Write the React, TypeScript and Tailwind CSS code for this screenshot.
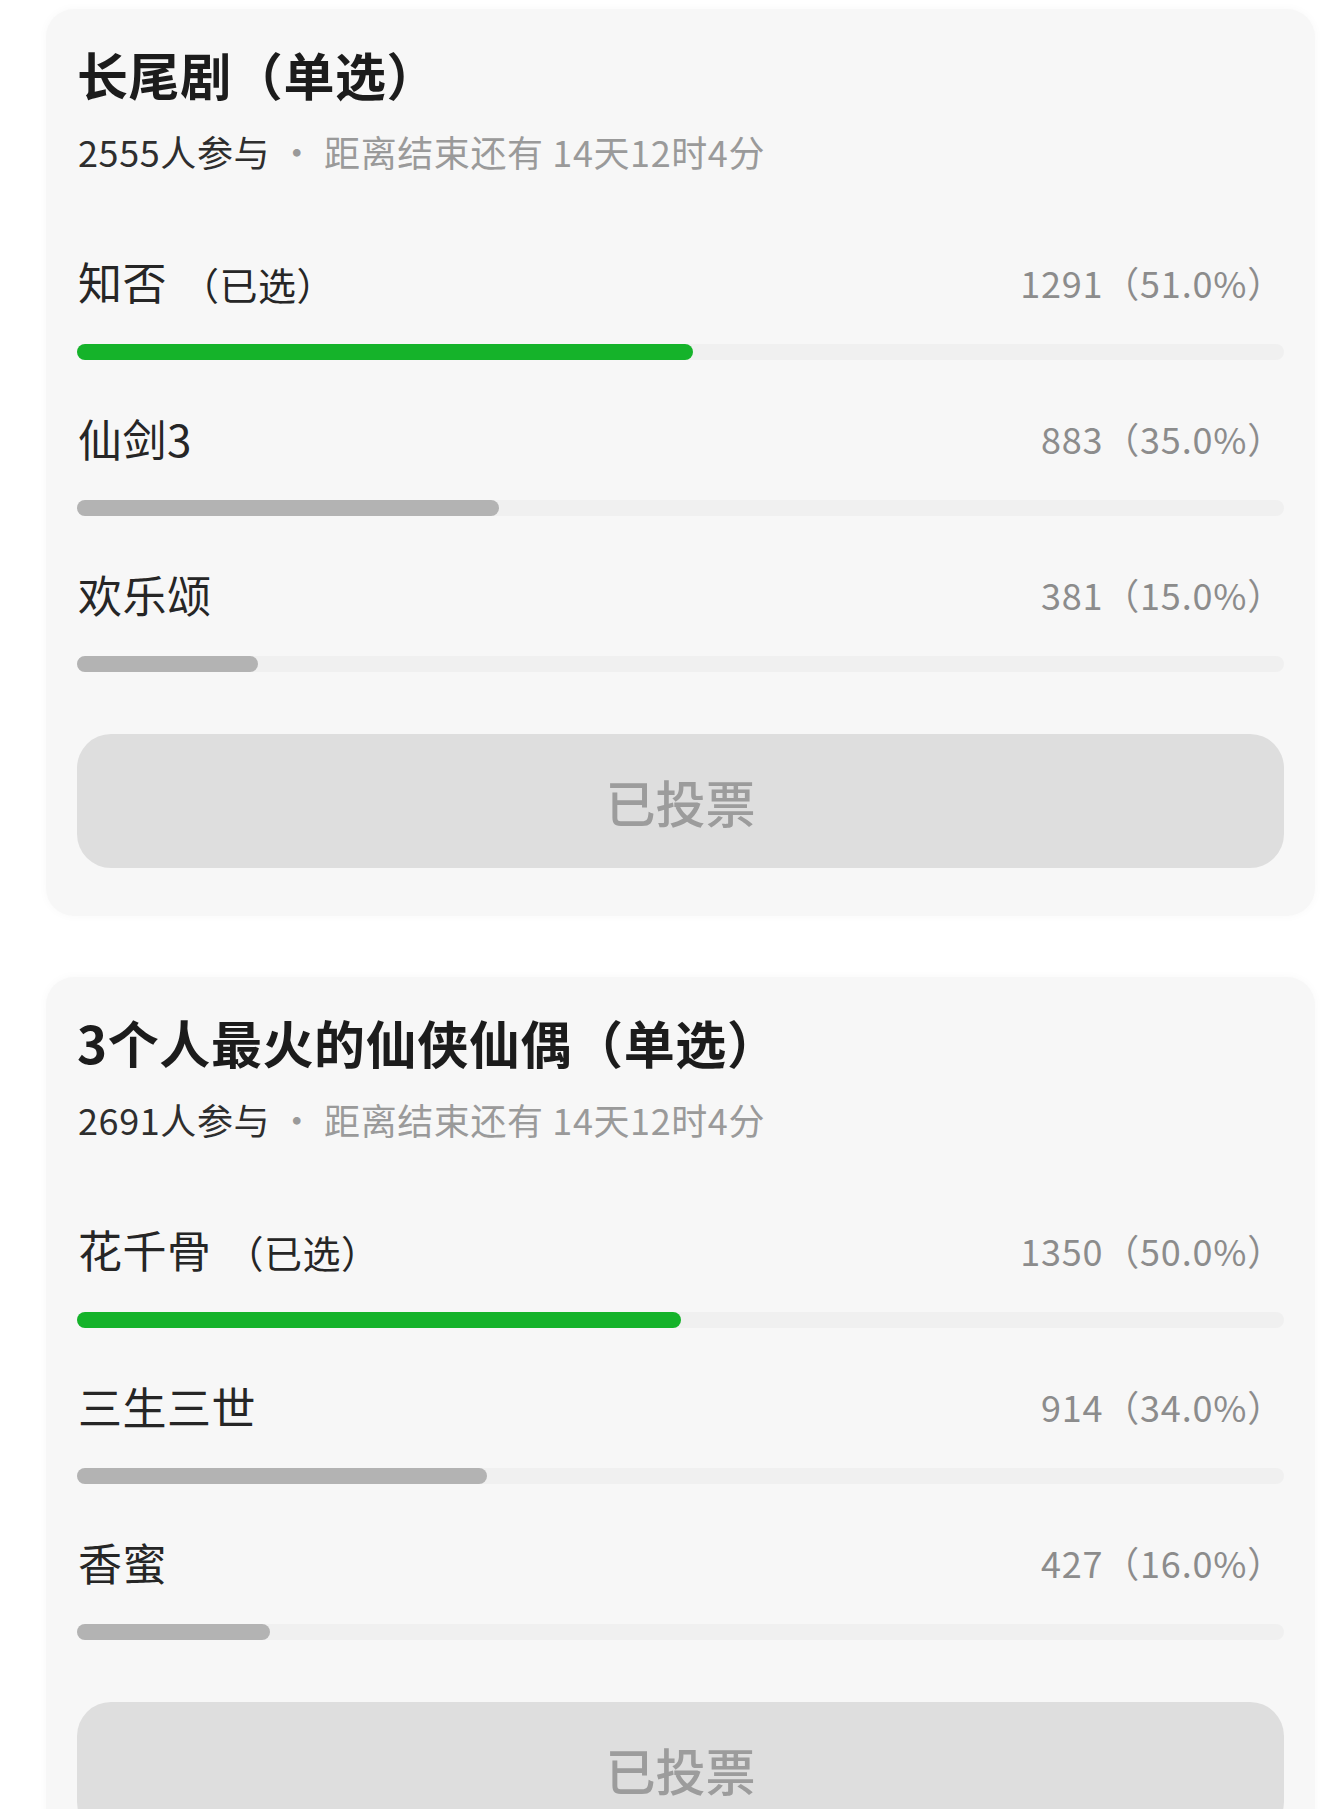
import React from "react";

interface PollOption {
  label: string;
  votes: number;
  percent: number;
  selected?: boolean;
}

interface Poll {
  title: string;
  participants: number;
  remaining: string;
  options: PollOption[];
}

const polls: Poll[] = [
  {
    title: "长尾剧（单选）",
    participants: 2555,
    remaining: "14天12时4分",
    options: [
      { label: "知否", votes: 1291, percent: 51, selected: true },
      { label: "仙剑3", votes: 883, percent: 35 },
      { label: "欢乐颂", votes: 381, percent: 15 },
    ],
  },
  {
    title: "3个人最火的仙侠仙偶（单选）",
    participants: 2691,
    remaining: "14天12时4分",
    options: [
      { label: "花千骨", votes: 1350, percent: 50, selected: true },
      { label: "三生三世", votes: 914, percent: 34 },
      { label: "香蜜", votes: 427, percent: 16 },
    ],
  },
];

const PollCard = ({ poll }: { poll: Poll }) => {
  return (
    <div className="ml-[46px] mr-[5px] rounded-[28px] bg-[#f7f7f7] px-[31px] pt-[35px] pb-[48px] shadow-[0_0_10px_rgba(0,0,0,0.03)]">
      <h2 className="text-[51px] leading-[60px] font-bold tracking-[0.6px] text-[#1c1c1c]">
        {poll.title}
      </h2>
      <p className="mt-[25px] text-[36px] leading-[44px] tracking-[0.6px] pl-[1px]">
        <span className="text-[#2e2e2e]">{poll.participants}人参与</span>
        <span className="text-[#9a9a9a]"> · 距离结束还有 {poll.remaining}</span>
      </p>

      <div className="mt-[81px] flex flex-col gap-[50px]">
        {poll.options.map((opt) => (
          <div key={opt.label}>
            <div className="flex h-[56px] items-center justify-between">
              <span className="text-[44px] leading-[56px] tracking-[0.5px] text-[#262626] pl-[1px]">
                {opt.label}
                {opt.selected && (
                  <span className="ml-[14px] text-[38px]">（已选）</span>
                )}
              </span>
              <span className="text-[36px] tracking-[0.8px] text-[#8c8c8c]">
                {opt.votes}（{opt.percent.toFixed(1)}%）
              </span>
            </div>
            <div className="mt-[34px] h-[16px] w-full rounded-full bg-[#f0f0f0]">
              <div
                className={`h-full rounded-full ${
                  opt.selected ? "bg-[#15b32a]" : "bg-[#b3b3b3]"
                }`}
                style={{ width: `${opt.percent}%` }}
              />
            </div>
          </div>
        ))}
      </div>

      <div className="mt-[62px] flex h-[134px] items-center justify-center rounded-[34px] bg-[#dedede]">
        <span className="text-[50px] font-medium text-[#9c9c9c]">已投票</span>
      </div>
    </div>
  );
};

export default function App() {
  return (
    <div
      className="min-h-screen bg-white pt-[9px]"
      style={{ fontFamily: '"Noto Sans CJK SC", "Noto Sans", sans-serif' }}
    >
      <div className="flex flex-col gap-[61px]">
        {polls.map((poll) => (
          <PollCard key={poll.title} poll={poll} />
        ))}
      </div>
    </div>
  );
}
